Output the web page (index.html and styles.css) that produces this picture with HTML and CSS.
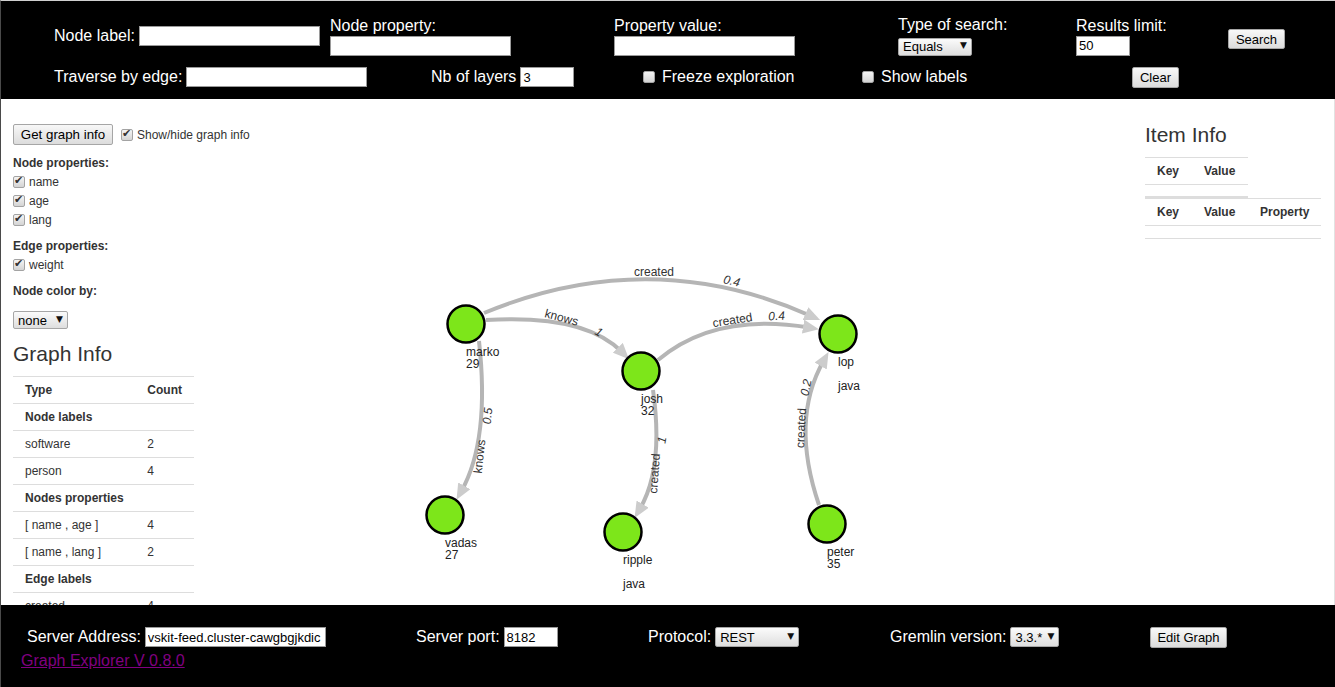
FILE: index.html
```html
<!DOCTYPE HTML>
<html>
<head>
<meta charset="utf-8">
<title>Graph Explorer</title>
<link rel="stylesheet" href="styles.css">
</head>

<body>
<div id="page">

<div id="head">
	<div class="search-row">
		<div class="cell"><label>Node label:</label><input type="text" class="txt"></div>
		<div class="cell stack"><label>Node property:</label><input type="text" class="txt"></div>
		<div class="cell stack"><label>Property value:</label><input type="text" class="txt"></div>
		<div class="cell stack"><label>Type of search:</label><span class="dd dd-search"><select><option>Equals</option></select></span></div>
		<div class="cell stack"><label>Results limit:</label><input type="text" class="txt short" value="50"></div>
		<div class="cell btn-cell"><button class="btn btn-search">Search</button></div>
	</div>
	<div class="tool-row">
		<div class="cell"><label>Traverse by edge:</label><input type="text" class="txt"></div>
		<div class="cell"><label>Nb of layers</label><input type="text" class="txt short" value="3"></div>
		<div class="cell check"><span class="cb"></span><label>Freeze exploration</label></div>
		<div class="cell check"><span class="cb"></span><label>Show labels</label></div>
		<div class="cell"><button class="btn btn-clear">Clear</button></div>
	</div>
</div>

<div id="main">
	<div class="panel">
		<div class="info-bar">
			<button class="btn btn-info">Get graph info</button>
			<span class="cb on"></span><span>Show/hide graph info</span>
		</div>
		<div class="group-title">Node properties:</div>
		<div class="opt"><span class="cb on"></span>name</div>
		<div class="opt"><span class="cb on"></span>age</div>
		<div class="opt"><span class="cb on"></span>lang</div>
		<div class="group-title gap">Edge properties:</div>
		<div class="opt"><span class="cb on"></span>weight</div>
		<div class="group-title gap">Node color by:</div>
		<span class="dd dd-color"><select><option>none</option></select></span>

		<h3>Graph Info</h3>
		<table class="stats">
			<tr><th>Type</th><th>Count</th></tr>
			<tr><th colspan="2">Node labels</th></tr>
			<tr><td>software</td><td>2</td></tr>
			<tr><td>person</td><td>4</td></tr>
			<tr><th colspan="2">Nodes properties</th></tr>
			<tr><td>[ name , age ]</td><td>4</td></tr>
			<tr><td>[ name , lang ]</td><td>2</td></tr>
			<tr><th colspan="2">Edge labels</th></tr>
			<tr><td>created</td><td>4</td></tr>
		</table>
	</div>

	<svg class="graph" viewBox="260 99 870 506" width="870" height="506">
		<defs>
			<marker id="arrow" viewBox="0 0 16 14" refX="6" refY="7" markerWidth="16" markerHeight="14" markerUnits="userSpaceOnUse" orient="auto">
				<path d="M0,0 L16,7 L0,14 z" fill="#ccc"/>
			</marker>
		</defs>
		<g class="links">
			<path d="M484,313 Q650,244 811,316" marker-end="url(#arrow)"/>
			<path d="M486,320 Q585,314 622,352" marker-end="url(#arrow)"/>
			<path d="M658,360 Q715,312 809,327.5" marker-end="url(#arrow)"/>
			<path d="M479,341 Q490,440 461.4,491.1" marker-end="url(#arrow)"/>
			<path d="M653,390 Q664,468 639.6,509.3" marker-end="url(#arrow)"/>
			<path d="M819,505 Q790,420 823.6,360.8" marker-end="url(#arrow)"/>
		</g>
		<g class="link-labels">
			<text x="654" y="276">created</text>
			<text class="w" transform="translate(731,285) rotate(13)">0.4</text>
			<text transform="translate(560.5,321.4) rotate(15)">knows</text>
			<text class="w" transform="translate(597,335.5) rotate(30)">1</text>
			<text transform="translate(733.1,324) rotate(-9)">created</text>
			<text class="w" transform="translate(776.8,320) rotate(-4)">0.4</text>
			<text transform="translate(483.5,456.9) rotate(-84)">knows</text>
			<text class="w" transform="translate(491.5,416.3) rotate(-85)">0.5</text>
			<text transform="translate(658.5,473.8) rotate(-86)">created</text>
			<text class="w" transform="translate(665.9,440.7) rotate(-80)">1</text>
			<text transform="translate(805,428.2) rotate(-87)">created</text>
			<text class="w" transform="translate(809.9,388.3) rotate(-78)">0.2</text>
		</g>
		<g class="nodes">
			<circle cx="466" cy="324" r="18.5"/>
			<circle cx="641" cy="371" r="18.5"/>
			<circle cx="838" cy="334" r="18.5"/>
			<circle cx="445" cy="515" r="18.5"/>
			<circle cx="623" cy="532" r="18.5"/>
			<circle cx="827" cy="524" r="18.5"/>
		</g>
		<g class="node-labels">
			<text x="466" y="356">marko</text><text x="466" y="368">29</text>
			<text x="641" y="403">josh</text><text x="641" y="415">32</text>
			<text x="838" y="366">lop</text><text x="838" y="390">java</text>
			<text x="445" y="547">vadas</text><text x="445" y="559">27</text>
			<text x="623" y="564">ripple</text><text x="623" y="588">java</text>
			<text x="827" y="556">peter</text><text x="827" y="568">35</text>
		</g>
	</svg>

	<div class="side">
		<h3>Item Info</h3>
		<div class="kv kv-item">
			<div class="kv-head"><span class="k">Key</span><span class="v">Value</span></div>
			<div class="kv-body"></div>
		</div>
		<div class="kv kv-prop">
			<div class="kv-head"><span class="k">Key</span><span class="v">Value</span><span>Property</span></div>
			<div class="kv-body"></div>
		</div>
	</div>
</div>

<div id="foot">
	<div class="server-row">
		<div class="cell"><label>Server Address:</label><input type="text" class="txt addr" value="vskit-feed.cluster-cawgbgjkdic"></div>
		<div class="cell"><label>Server port:</label><input type="text" class="txt short" value="8182"></div>
		<div class="cell"><label>Protocol:</label><span class="dd dd-proto"><select><option>REST</option></select></span></div>
		<div class="cell"><label>Gremlin version:</label><span class="dd dd-ver"><select><option>3.3.*</option></select></span></div>
		<div class="cell"><button class="btn btn-edit">Edit Graph</button></div>
	</div>
	<a class="version" href="#">Graph Explorer V 0.8.0</a>
</div>

</div>
</body>
</html>
```

FILE: styles.css
```css
body {
	margin: 0px;
	padding: 0px;
	font-family: "Liberation Sans", Arial, sans-serif;
}
#page {
	height: 686px;
	border-top: 1px solid #cfcfcf;
	border-left: 1px solid #4a4a4a;
	display: flex;
	flex-direction: column;
	overflow: hidden;
}

/* black search bar */
#head {
	height: 98px;
	box-sizing: border-box;
	padding: 15px 0px 0px 53px;
	background: #000;
	color: #fff;
	font-size: 16px;
}
.search-row {
	display: grid;
	grid-template-columns: 276px 284px 284px 178px 152px auto;
	align-items: center;
	height: 40px;
}
.tool-row {
	display: grid;
	grid-template-columns: 377px 212px 219px 270px auto;
	align-items: center;
	height: 24px;
	margin-top: 9px;
}
.cell {
	display: flex;
	align-items: center;
	gap: 4px;
}
.cell.stack {
	flex-direction: column;
	align-items: flex-start;
	gap: 1px;
}
.cell.stack label {
	line-height: 18px;
}
.cell.stack .dd {
	margin-top: 2px;
}
.btn-cell {
	align-self: start;
	margin-top: 13px;
}
.cell.check {
	gap: 7px;
}

.txt {
	width: 181px;
	height: 20px;
	box-sizing: border-box;
	margin: 0px;
	padding: 1px 2px;
	border: 1px solid #9a9a9a;
	background: #fff;
	font: 13px "Liberation Sans", Arial, sans-serif;
	color: #000;
}
.txt.short {
	width: 54px;
}

.btn {
	height: 20px;
	margin: 0px;
	padding: 0px 6px;
	border: 1px solid #a6a6a6;
	border-radius: 2px;
	background: linear-gradient(#f8f8f8, #dcdcdc);
	font: 13px "Liberation Sans", Arial, sans-serif;
	color: #000;
}
.btn-search {
	width: 57px;
}
.btn-clear {
	width: 47px;
	height: 21px;
}
.btn-info {
	width: 100px;
	height: 21px;
	font-size: 13.3px;
}
.btn-edit {
	width: 77px;
	height: 21px;
}

/* drop-downs with the little black triangle */
.dd {
	position: relative;
	display: inline-block;
}
.dd select {
	-webkit-appearance: none;
	appearance: none;
	width: 100%;
	height: 18px;
	margin: 0px;
	padding: 0px 14px 0px 4px;
	border: 1px solid #a6a6a6;
	border-radius: 2px;
	background: linear-gradient(#fbfbfb, #dedede);
	font: 13px "Liberation Sans", Arial, sans-serif;
	color: #000;
}
.dd::after {
	content: "\25BC";
	position: absolute;
	right: 5px;
	top: 3px;
	font-family: "DejaVu Sans", sans-serif;
	font-size: 9px;
	color: #111;
	pointer-events: none;
}
.dd-search { width: 74px; }
.dd-color { width: 55px; }
.dd-proto { width: 84px; }
.dd-ver { width: 49px; }
.dd-proto select, .dd-ver select {
	height: 20px;
}
.dd-proto::after, .dd-ver::after {
	top: 4px;
}

/* check boxes */
.cb {
	position: relative;
	display: inline-block;
	flex: none;
	width: 12px;
	height: 12px;
	box-sizing: border-box;
	border: 1px solid #a3a3a3;
	border-radius: 2px;
	background: linear-gradient(#f4f4f4, #d4d4d4);
}
.cb.on::after {
	content: "\2714";
	position: absolute;
	left: 0px;
	top: -3px;
	font-family: "DejaVu Sans", sans-serif;
	font-size: 11px;
	color: #333;
}

/* middle area */
#main {
	height: 506px;
	display: grid;
	grid-template-columns: 259px 870px 1fr;
	border-right: 1px solid #e2e2e2;
	overflow: hidden;
	color: #333;
	font-size: 12px;
}
.panel {
	padding: 25px 0px 0px 12px;
}
.info-bar {
	display: flex;
	align-items: center;
	gap: 4px;
}
.info-bar .btn {
	margin-right: 4px;
}
.group-title {
	margin-top: 10px;
	font-weight: bold;
	line-height: 17px;
}
.group-title.gap {
	margin-top: 9px;
}
.opt {
	display: flex;
	align-items: center;
	gap: 4px;
	height: 19px;
}
.dd-color {
	margin-top: 11px;
}
h3 {
	margin: 13px 0px 10px 0px;
	font-size: 21px;
	font-weight: normal;
	line-height: 24px;
	color: #333;
}
.stats {
	width: 181px;
	border-collapse: collapse;
}
.stats th, .stats td {
	padding: 5px 12px;
	border-top: 1px solid #ddd;
	line-height: 16px;
	text-align: left;
}
.stats tr > :first-child {
	width: 111px;
}

.graph {
	display: block;
}
.links path {
	fill: none;
	stroke: #b5b5b5;
	stroke-width: 4;
}
.link-labels text {
	font-family: "Liberation Sans", Arial, sans-serif;
	font-size: 12px;
	fill: #333;
	text-anchor: middle;
}
.link-labels .w {
	font-style: italic;
}
.nodes circle {
	fill: #7de61a;
	stroke: #000;
	stroke-width: 2.5;
}
.node-labels text {
	font-family: "Liberation Sans", Arial, sans-serif;
	font-size: 12px;
	fill: #222;
}

.side {
	padding: 24px 0px 0px 15px;
}
.side h3 {
	margin: 0px 0px 10px 0px;
}
.kv-head {
	display: flex;
	height: 26px;
	border-top: 1px solid #ddd;
	border-bottom: 1px solid #ddd;
	font-weight: bold;
	line-height: 26px;
}
.kv-head span {
	padding-left: 12px;
	box-sizing: border-box;
}
.kv-head .k {
	width: 47px;
}
.kv-head .v {
	width: 56px;
}
.kv-item {
	width: 103px;
}
.kv-item .kv-body {
	height: 11px;
	border-bottom: 2px solid #ddd;
}
.kv-prop {
	width: 176px;
}
.kv-prop .kv-body {
	height: 12px;
	border-bottom: 1px solid #ddd;
}

/* black server bar */
#foot {
	flex: 1;
	padding: 21px 0px 0px 20px;
	background: #000;
	color: #fff;
	font-size: 16px;
}
.server-row {
	display: grid;
	grid-template-columns: 389px 232px 242px 260px auto;
	align-items: center;
	height: 22px;
	padding-left: 6px;
}
.version {
	display: inline-block;
	margin-top: 4px;
	line-height: 18px;
	color: #800080;
}
```
